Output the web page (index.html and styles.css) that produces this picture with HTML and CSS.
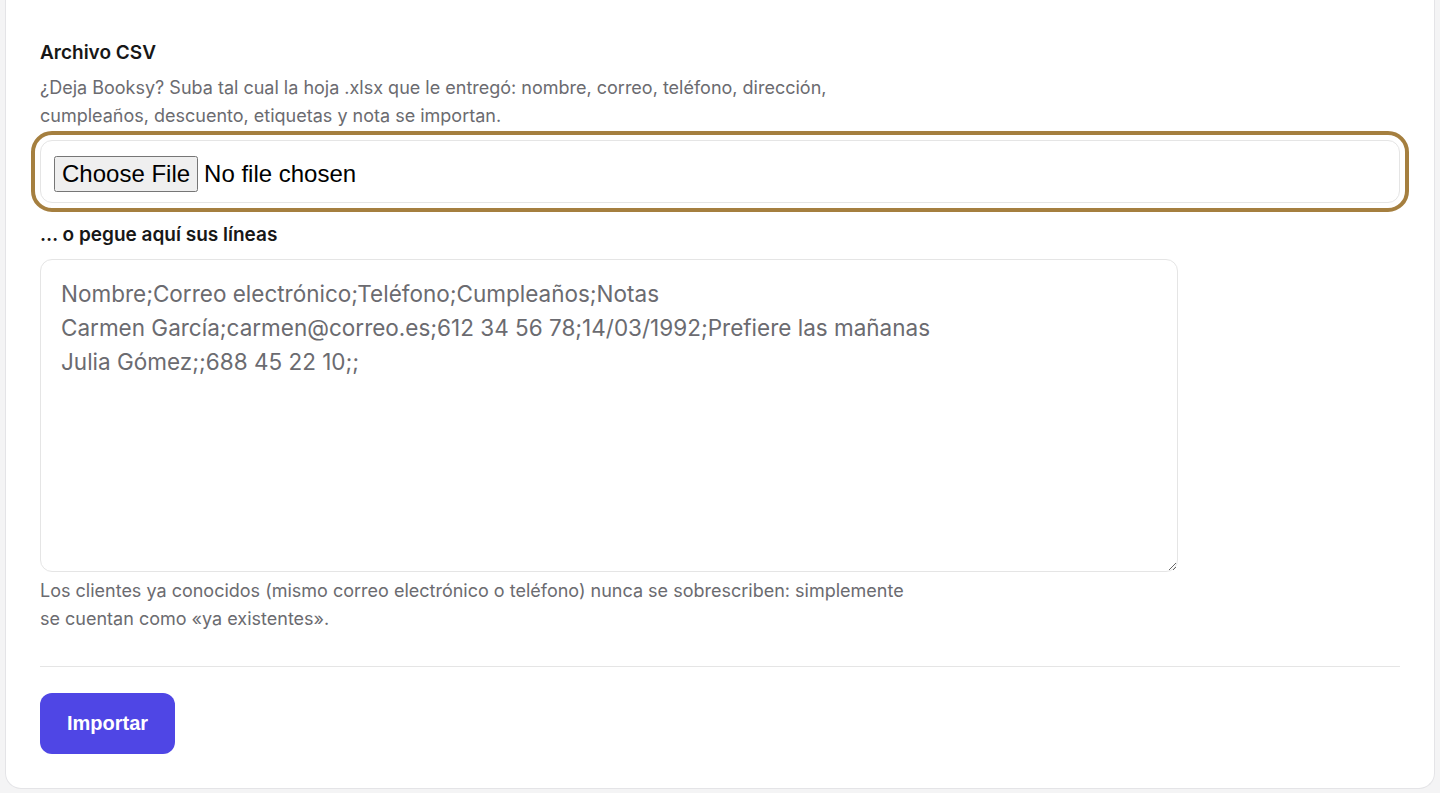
FILE: index.html
```html
<!DOCTYPE html>
<html lang="es">
<head>
<meta charset="utf-8">
<title>Importar clientes</title>
<link rel="stylesheet" href="styles.css">
</head>
<body>
<main class="page">
  <form class="card">
    <label class="label" for="csv">Archivo CSV</label>
    <p class="help help-top">¿Deja Booksy? Suba tal cual la hoja .xlsx que le entregó: nombre, correo, teléfono, dirección, cumpleaños, descuento, etiquetas y nota se importan.</p>
    <input class="file" id="csv" type="file" autofocus>
    <label class="label label-paste" for="lines">… o pegue aquí sus líneas</label>
    <textarea class="lines" id="lines" placeholder="Nombre;Correo electrónico;Teléfono;Cumpleaños;Notas
Carmen García;carmen@correo.es;612 34 56 78;14/03/1992;Prefiere las mañanas
Julia Gómez;;688 45 22 10;;"></textarea>
    <p class="help help-bottom">Los clientes ya conocidos (mismo correo electrónico o teléfono) nunca se sobrescriben: simplemente se cuentan como «ya existentes».</p>
    <hr class="divider">
    <button class="submit" type="button">Importar</button>
  </form>
</main>
</body>
</html>
```

FILE: styles.css
```css
* { box-sizing: border-box; }

html, body {
  margin: 0;
  height: 100%;
}

body {
  background: #f4f4f5;
  font-family: Inter, "Noto Sans", sans-serif;
  color: #171717;
  overflow: hidden;
}

.page {
  padding: 0 5px 4px;
}

.card {
  display: flex;
  flex-direction: column;
  align-items: flex-start;
  background: #ffffff;
  border: 1px solid #e4e4e7;
  border-top-width: 0;
  border-radius: 0 0 16px 16px;
  padding: 41px 34px 34px;
}

.label {
  font-size: 19px;
  line-height: 24px;
  font-weight: 600;
  color: #171717;
}

.help {
  margin: 0;
  max-width: 880px;
  font-size: 18px;
  line-height: 28px;
  color: #6b6b70;
}

.help-top {
  margin-top: 9px;
}

.file {
  align-self: stretch;
  margin-top: 10px;
  height: 63px;
  padding: 15px 13px 0;
  border: 1px solid #e5e5e5;
  border-radius: 12px;
  background: #fff;
  font-family: "Liberation Sans", Arial, sans-serif;
  font-size: 24px;
  color: #000;
  outline: 4px solid #a57f3f;
  outline-offset: 5px;
}

.file::file-selector-button {
  padding: 2px 6px;
  margin-right: 6px;
}

.file:focus {
  outline: 4px solid #a57f3f;
  outline-offset: 5px;
}

.label-paste {
  margin-top: 20px;
}

.lines {
  margin-top: 12px;
  width: 1138px;
  height: 313px;
  padding: 17px 20px;
  border: 1px solid #e5e5e5;
  border-radius: 12px;
  font-family: Inter, "Noto Sans", sans-serif;
  font-size: 22.5px;
  line-height: 34px;
  color: #3f3f46;
  resize: vertical;
  outline: none;
}

.lines::placeholder {
  color: #6b6b70;
  opacity: 1;
}

.help-bottom {
  margin-top: 5px;
}

.divider {
  align-self: stretch;
  margin: 33px 0 0;
  border: 0;
  border-top: 1px solid #e5e5e5;
  height: 0;
}

.submit {
  margin-top: 26px;
  width: 135px;
  height: 61px;
  border: 0;
  border-radius: 12px;
  background: #4f46e5;
  color: #fff;
  font-family: "Liberation Sans", Arial, sans-serif;
  font-size: 20px;
  font-weight: 700;
  cursor: pointer;
}
```
